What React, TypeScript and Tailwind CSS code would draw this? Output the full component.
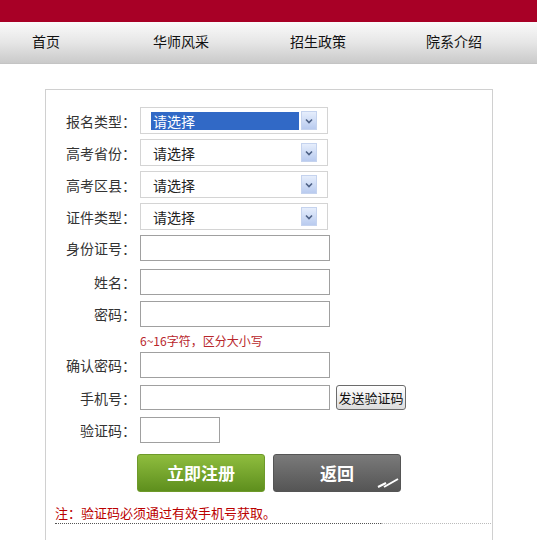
import React from "react";

const font = { fontFamily: '"Noto Sans CJK SC", "Noto Sans", sans-serif' };

function Arrow() {
  return (
    <div className="w-[16px] h-[19px] flex items-center justify-center bg-gradient-to-b from-[#e6eefc] to-[#b9cbef] border border-[#c5d3ee]">
      <svg width="8" height="6" viewBox="0 0 8 6">
        <path d="M1 1.5 L4 4.5 L7 1.5" stroke="#4d6185" strokeWidth="1.6" fill="none" />
      </svg>
    </div>
  );
}

function SelectBox({ active }: { active?: boolean }) {
  return (
    <div className="w-[188px] h-[27px] border border-[#d4d4d4] bg-white flex items-center pl-[10px] pr-[10px]">
      <div
        className={
          "flex-1 h-[18px] flex items-center text-[14px] leading-none pl-[2px] " +
          (active ? "bg-[#3169c6] text-white" : "text-[#222]")
        }
      >
        请选择
      </div>
      <div className="ml-[2px]">
        <Arrow />
      </div>
    </div>
  );
}

function Row({
  label,
  children,
  mt,
}: {
  label: string;
  children: React.ReactNode;
  mt: string;
}) {
  return (
    <div className={"flex items-center " + mt}>
      <div className="w-[90px] text-right text-[14px] text-[#333] leading-none">
        {label}
      </div>
      <div className="ml-[4px] flex items-center">{children}</div>
    </div>
  );
}

export default function App() {
  return (
    <div className="w-[537px] h-[540px] bg-white overflow-hidden" style={font}>
      <div className="h-[22px] bg-[#a80026]" />
      <div className="h-[42px] bg-gradient-to-b from-[#fafafa] via-[#e6e6e6] to-[#cacaca] border-b border-[#c4c4c4] flex items-center pb-[2px] text-[14px] text-[#111]">
        <span className="ml-[32px]">首页</span>
        <span className="ml-[93px]">华师风采</span>
        <span className="ml-[81px]">招生政策</span>
        <span className="ml-[80px]">院系介绍</span>
      </div>
      <div className="ml-[45px] mt-[25px] w-[448px] h-[500px] border border-[#d0d0d0] border-b-0 pt-[17px]">
        <Row label="报名类型：" mt="mt-0">
          <SelectBox active />
        </Row>
        <Row label="高考省份：" mt="mt-[5px]">
          <SelectBox />
        </Row>
        <Row label="高考区县：" mt="mt-[5px]">
          <SelectBox />
        </Row>
        <Row label="证件类型：" mt="mt-[5px]">
          <SelectBox />
        </Row>
        <Row label="身份证号：" mt="mt-[5px]">
          <div className="w-[190px] h-[26px] border border-[#a0a0a0] bg-white" />
        </Row>
        <Row label="姓名：" mt="mt-[8px]">
          <div className="w-[190px] h-[26px] border border-[#a0a0a0] bg-white" />
        </Row>
        <Row label="密码：" mt="mt-[6px]">
          <div className="w-[190px] h-[26px] border border-[#a0a0a0] bg-white" />
        </Row>
        <div className="ml-[94px] mt-[7px] h-[14px] text-[12px] leading-[14px] text-[#b8262b]">
          6~16字符，区分大小写
        </div>
        <Row label="确认密码：" mt="mt-[4px]">
          <div className="w-[190px] h-[26px] border border-[#a0a0a0] bg-white" />
        </Row>
        <Row label="手机号：" mt="mt-[7px]">
          <div className="w-[190px] h-[25px] border border-[#a0a0a0] bg-white" />
          <button className="ml-[6px] w-[70px] h-[25px] rounded-[3px] border border-[#6b6b6b] bg-gradient-to-b from-white to-[#dcdcdc] text-[13px] leading-none text-[#111]">
            发送验证码
          </button>
        </Row>
        <Row label="验证码：" mt="mt-[7px]">
          <div className="w-[80px] h-[26px] border border-[#a0a0a0] bg-white" />
        </Row>
        <div className="flex mt-[11px] ml-[91px]">
          <div className="w-[128px] h-[38px] rounded-[3px] bg-gradient-to-b from-[#8fbd3e] to-[#5e8f1d] border border-[#6e9a2a] flex items-center justify-center text-white text-[17px] font-bold">
            立即注册
          </div>
          <div className="relative ml-[8px] w-[128px] h-[38px] rounded-[3px] bg-gradient-to-b from-[#7a7a7a] to-[#555] border border-[#555] flex items-center justify-center text-white text-[17px] font-bold">
            返回
            <svg className="absolute right-[0px] bottom-[2px]" width="24" height="14" viewBox="0 0 24 14">
              <path d="M2 12 L10 8 M8 12 L22 4" stroke="white" strokeWidth="2" fill="none" />
            </svg>
          </div>
        </div>
        <div className="ml-[9px] mt-[14px] h-[14px] text-[13px] leading-[14px] text-[#b00]">
          注：验证码必须通过有效手机号获取。
        </div>
        <div className="ml-[9px] mt-[3px] flex w-[436px]">
          <div className="w-[326px] border-t border-dotted border-[#555]" />
          <div className="flex-1 border-t border-dotted border-[#bbb]" />
        </div>
      </div>
    </div>
  );
}
